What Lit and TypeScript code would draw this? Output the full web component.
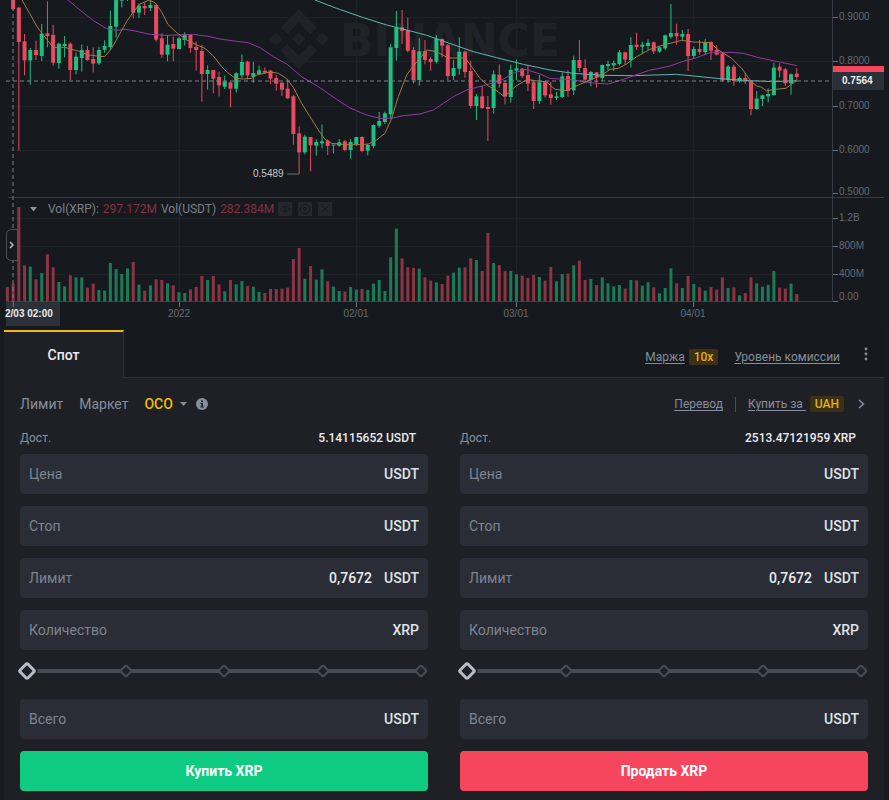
import { LitElement, html, svg, css } from "lit";
import { customElement, property } from "lit/decorators.js";
import { classMap } from "lit/directives/class-map.js";

/* One row per day: rising flag, body top, body bottom, high, low, volume top (thirds of a unit). */
const DAYS: number[][] = [
  [0, -20, -18, -20, -18, 861], [0, -10, 27, -10, 30, 850], [0, 23, 126, 20, 452, 621], [0, 124, 181, 102, 226, 796],
  [1, 150, 181, 144, 254, 800], [0, 150, 165, 122, 180, 838], [1, 101, 168, 72, 183, 819], [0, 100, 108, 4, 142, 763],
  [0, 105, 188, 75, 197, 802], [1, 131, 189, 128, 206, 846], [1, 132, 138, 108, 172, 859], [0, 131, 210, 127, 240, 826],
  [1, 170, 210, 158, 223, 832], [1, 150, 174, 133, 215, 832], [0, 150, 180, 138, 182, 863], [0, 177, 191, 142, 217, 851],
  [1, 150, 190, 140, 195, 870], [1, 138, 149, 121, 158, 872], [1, 78, 141, 32, 150, 789], [1, -10, 80, -10, 112, 807],
  [1, -10, 2, -10, 22, 822], [1, -10, -8, -10, 3, 805], [0, -10, 38, -10, 55, 786], [1, 17, 38, 10, 54, 854],
  [0, 18, 25, 8, 45, 872], [1, 15, 24, 3, 33, 856], [0, 15, 119, 14, 125, 838], [0, 115, 164, 100, 174, 840],
  [1, 134, 164, 105, 184, 850], [0, 132, 146, 110, 184, 856], [1, 115, 147, 110, 148, 877], [1, 103, 120, 97, 136, 879],
  [0, 105, 144, 104, 158, 868], [0, 141, 150, 124, 212, 861], [0, 153, 222, 135, 305, 828], [1, 210, 222, 196, 269, 840],
  [0, 210, 236, 210, 280, 828], [0, 231, 256, 215, 289, 853], [1, 244, 260, 227, 267, 874], [0, 247, 266, 245, 322, 840],
  [1, 220, 266, 217, 278, 853], [1, 186, 226, 163, 233, 843], [0, 185, 226, 182, 238, 858], [1, 219, 231, 185, 248, 860],
  [1, 211, 222, 197, 223, 876], [0, 212, 218, 202, 222, 879], [0, 212, 236, 210, 252, 867], [0, 234, 251, 225, 272, 867],
  [0, 248, 269, 247, 288, 866], [0, 266, 295, 238, 297, 863], [0, 289, 402, 284, 434, 777], [0, 400, 457, 379, 522, 744],
  [1, 410, 457, 404, 463, 836], [0, 411, 436, 411, 514, 798], [1, 426, 437, 418, 467, 839], [1, 424, 430, 373, 445, 808],
  [0, 422, 438, 418, 465, 844], [1, 434, 437, 434, 460, 860], [1, 427, 437, 417, 440, 873], [0, 424, 450, 420, 454, 875],
  [1, 426, 450, 417, 476, 861], [1, 411, 432, 411, 438, 869], [0, 411, 453, 409, 457, 867], [1, 435, 452, 432, 466, 870],
  [1, 375, 438, 373, 445, 851], [1, 363, 377, 336, 383, 840], [1, 340, 366, 335, 372, 873], [1, 142, 343, 132, 357, 772],
  [1, 83, 144, 33, 182, 686], [0, 82, 93, 30, 132, 775], [0, 90, 152, 53, 157, 802], [0, 150, 240, 142, 250, 804],
  [1, 154, 240, 115, 257, 806], [0, 153, 180, 120, 193, 832], [0, 177, 186, 170, 212, 842], [1, 116, 185, 105, 190, 847],
  [0, 117, 137, 115, 172, 852], [0, 136, 228, 132, 240, 827], [1, 204, 228, 180, 240, 818], [1, 155, 206, 112, 224, 803],
  [0, 155, 216, 152, 233, 802], [0, 213, 318, 183, 325, 775], [1, 289, 318, 282, 360, 780], [0, 289, 324, 258, 327, 813],
  [0, 321, 327, 288, 423, 699], [1, 223, 324, 211, 341, 789], [0, 224, 251, 193, 263, 795], [0, 249, 290, 240, 313, 813],
  [1, 210, 291, 194, 308, 813], [1, 205, 212, 178, 240, 823], [0, 206, 228, 204, 234, 827], [0, 225, 251, 196, 273, 834],
  [0, 247, 303, 240, 327, 825], [1, 247, 303, 225, 312, 831], [0, 245, 286, 243, 293, 842], [0, 283, 294, 246, 314, 801],
  [1, 289, 294, 276, 300, 844], [1, 229, 291, 217, 294, 822], [0, 228, 273, 210, 290, 821], [1, 180, 271, 167, 285, 796],
  [0, 180, 204, 120, 216, 782], [0, 204, 239, 178, 250, 840], [1, 216, 240, 213, 259, 837], [0, 217, 232, 217, 263, 855],
  [1, 195, 234, 193, 243, 832], [1, 192, 198, 182, 210, 850], [1, 189, 196, 182, 213, 859], [1, 157, 192, 150, 196, 855],
  [0, 157, 179, 155, 195, 866], [1, 135, 180, 112, 202, 840], [0, 134, 141, 98, 150, 841], [1, 134, 140, 125, 160, 857],
  [1, 128, 138, 118, 150, 847], [0, 127, 154, 124, 162, 862], [1, 142, 155, 140, 158, 880], [1, 106, 145, 104, 150, 864],
  [1, 99, 110, 12, 116, 805], [0, 99, 109, 71, 134, 850], [1, 102, 110, 90, 122, 864], [0, 102, 168, 87, 213, 828],
  [1, 147, 168, 139, 174, 852], [0, 147, 156, 120, 164, 862], [1, 126, 156, 117, 165, 872], [0, 126, 152, 124, 180, 861],
  [0, 150, 164, 135, 166, 869], [0, 161, 241, 158, 245, 832], [1, 200, 240, 195, 248, 864], [0, 200, 243, 194, 257, 862],
  [1, 234, 244, 230, 248, 886], [0, 234, 245, 219, 252, 879], [0, 242, 327, 240, 345, 832], [1, 296, 327, 273, 329, 850],
  [1, 286, 297, 284, 318, 860], [1, 282, 289, 265, 307, 855], [1, 203, 285, 188, 287, 813], [0, 200, 212, 190, 232, 863],
  [0, 208, 250, 204, 258, 866], [1, 223, 250, 220, 284, 851], [0, 221, 231, 204, 240, 882],
];

/* Moving averages, in the same thirds of a unit. */
const MA_FAST = "66,0 90,42 110,78 122,95 140,118 160,143 175,142 195,142 215,148 235,153 262,164 290,168 314,170 335,145 360,100 380,65 400,35 420,12 448,0 465,8 485,36 503,72 530,98 560,120 588,134 615,145 640,168 665,200 680,215 705,235 730,237 755,235 770,225 810,216 835,220 860,236 880,262 905,310 930,350 955,390 975,418 995,430 1040,434 1080,434 1105,432 1130,420 1155,400 1175,355 1195,290 1220,225 1240,198 1260,175 1280,150 1310,155 1345,174 1395,174 1415,200 1440,235 1465,258 1485,268 1510,288 1525,280 1545,260 1582,238 1605,242 1640,246 1665,268 1700,272 1735,255 1770,240 1805,226 1830,208 1855,205 1880,192 1910,170 1950,148 1980,138 2010,130 2045,121 2080,126 2130,128 2155,150 2195,175 2225,205 2250,240 2270,258 2285,262 2300,273 2325,268 2358,265 2375,252 2391,242";
const MA_MID = "204,0 240,30 280,62 320,86 350,91 375,88 400,92 450,103 500,106 580,103 630,110 660,117 710,124 745,128 780,143 820,170 860,192 905,230 955,260 1010,298 1050,324 1100,345 1140,355 1175,355 1210,347 1260,342 1300,330 1330,310 1360,290 1400,270 1450,257 1500,243 1540,220 1575,208 1620,222 1650,235 1680,237 1720,240 1780,249 1825,252 1870,238 1945,212 2010,198 2050,184 2090,173 2130,158 2190,157 2230,160 2280,174 2330,184 2391,197";
const MA_SLOW = "945,0 1010,25 1090,53 1160,75 1220,90 1280,106 1320,120 1420,155 1490,173 1570,193 1650,210 1720,220 1810,226 1900,227 2030,223 2080,228 2160,236 2250,242 2320,245 2391,242";

const PRICES: [number, string][] = [[17, "0.9000"], [61, "0.8000"], [106, "0.7000"], [150, "0.6000"], [193, "0.5000"]];
const VOLUMES: [number, string][] = [[218, "1.2B"], [246, "800M"], [274, "400M"], [301, "0.00"]];
const DATES: [number, string][] = [[179, "2022"], [356, "02/01"], [516, "03/01"], [693, "04/01"]];

@customElement("price-chart")
export class PriceChart extends LitElement {
  static styles = css`
    :host { display: block; position: relative; background: #161a1e; font-family: Roboto, sans-serif; }
    .plot { display: block; width: 100%; height: auto; }
    .label { font: 10px "Liberation Sans", sans-serif; fill: #646b76; }
    .low { fill: #c3c8cf; }
    .tag { font-weight: 700; fill: #eaecef; }
    .mid { text-anchor: middle; }
    .mark { font: 700 44px "DejaVu Sans", sans-serif; fill: #1f2328; }
    .logo { fill: #1f2328; }
    .grid { stroke: #1e2227; }
    .axis { stroke: #363b44; }
    .tick { stroke: #6a707a; }
    .up { fill: #1fbf81; }
    .down { fill: #ea4a60; }
    .vol-up { fill: #1d7a56; }
    .vol-down { fill: #8b3444; }
    .ma { fill: none; stroke-width: 3; }
    .fast { stroke: #a47a45; }
    .mid-line { stroke: #94399f; }
    .slow { stroke: #5fb5b0; }
    .cross { stroke: #7b8088; stroke-dasharray: 4 3; }
    .plate { fill: #2b3139; }
    .last { fill: #f6465d; }
    .legend { position: absolute; top: 202px; left: 29px; display: flex; align-items: center; gap: 4px; font-size: 12px; line-height: 14px; color: #7a808a; }
    .caret { width: 9px; height: 5px; margin-right: 6px; }
    .value { color: #86303e; }
    .tool { width: 14px; height: 14px; padding: 0; border: 0; background: #24282d; }
    .tool + .tool { margin-left: 2px; }
    .tool svg { display: block; width: 14px; height: 14px; fill: none; stroke: #171b20; }
    .handle { position: absolute; top: 229px; left: 6px; width: 12px; height: 32px; padding: 0; border: 1px solid #4a4f58; border-radius: 5px 0 0 5px; background: #161a1e; }
    .handle svg { display: block; width: 10px; height: 10px; fill: none; stroke: #b7bdc6; stroke-width: 1.5; }
  `;

  private candle(d: number[], i: number) {
    const x = 7.4 + i * 5.72;
    const tone = d[0] ? "up" : "down";
    return svg`
      <rect class=${tone} x=${x - 0.5} y=${d[3] / 3} width="1" height=${(d[4] - d[3]) / 3}></rect>
      <rect class=${tone} x=${x - 2} y=${d[1] / 3} width="4" height=${(d[2] - d[1]) / 3}></rect>
      <rect class="vol-${tone}" x=${x - 1.5} y=${d[5] / 3} width="3" height=${301.5 - d[5] / 3}></rect>`;
  }

  render() {
    return html`
      <svg class="plot" viewBox="0 0 889 330" role="img" aria-label="XRP/USDT">
        ${PRICES.slice(0, 4).concat(VOLUMES.slice(0, 3)).map(([y]) => svg`<path class="grid" d="M8 ${y + 0.5}H832"></path>`)}
        ${DATES.map(([x]) => svg`<path class="grid" d="M${x + 0.5} 0V301"></path>`)}
        <g class="logo" transform="translate(269 9) scale(.474)">
          <path d="M38.2 53.2 62.8 28.6 87.4 53.2 101.7 38.9 62.8 0 23.9 38.9zM0 63.3 14.3 49 28.6 63.3 14.3 77.6zM38.2 73.4 62.8 98 87.4 73.4 101.7 87.7 62.8 126.6 23.9 87.7zM98 63.3 112.3 49 126.6 63.3 112.3 77.6zM77.3 63.3 62.8 48.8 48.3 63.3 62.8 77.8z"></path>
        </g>
        <text class="mark" x="340" y="56">BINANCE</text>
        <path class="axis" d="M8 197.5H884M8 301.5H832M832.5 0V302"></path>
        ${DAYS.map((d, i) => this.candle(d, i))}
        <g transform="scale(.33333)">
          <polyline class="ma slow" points=${MA_SLOW}></polyline>
          <polyline class="ma mid-line" points=${MA_MID}></polyline>
          <polyline class="ma fast" points=${MA_FAST}></polyline>
        </g>
        ${PRICES.map(([y, t]) => svg`<path class="tick" d="M833 ${y + 0.5}h5"></path><text class="label" x="839" y=${y === 193 ? 195 : y + 3}>${t}</text>`)}
        ${VOLUMES.map(([y, t]) => svg`<path class="tick" d="M833 ${y + 0.5}h5"></path><text class="label" x="839" y=${y === 301 ? 300 : y + 3}>${t}</text>`)}
        ${DATES.map(([x, t]) => svg`<path class="tick" d="M${x + 0.5} 302v5"></path><text class="label mid" x=${x} y="317">${t}</text>`)}
        <path class="tick" d="M287 174h12"></path>
        <text class="label low" x="253" y="177">0.5489</text>
        <path class="cross" d="M6 81H832M13 0V302"></path>
        <rect class="last" x="833" y="66" width="51" height="6"></rect>
        <rect class="plate" x="833" y="72" width="51" height="18"></rect>
        <text class="label tag" x="842" y="84">0.7564</text>
        <rect class="plate" x="6" y="302" width="54" height="24"></rect>
        <path class="tick" d="M13.5 302v5"></path>
        <text class="label tag" x="5" y="317">2/03 02:00</text>
      </svg>
      <div class="legend">
        <svg class="caret" viewBox="0 0 9 5"><path fill="#8d939d" d="M1 0h7L4.500 4.500z"></path></svg>
        <span>Vol(XRP):</span><span class="value">297.172M</span>
        <span>Vol(USDT)</span><span class="value">282.384M</span>
        <button class="tool" aria-label="Показать"><svg viewBox="0 0 14 14"><path d="M2 7q5-6 10 0q-5 6-10 0z"></path><circle cx="7" cy="7" r="1.500"></circle></svg></button>
        <button class="tool" aria-label="Настройки"><svg viewBox="0 0 14 14"><circle cx="7" cy="7" r="4.500"></circle><circle cx="7" cy="7" r="1.500"></circle></svg></button>
        <button class="tool" aria-label="Закрыть"><svg viewBox="0 0 14 14"><path d="M3 3l8 8M11 3l-8 8"></path></svg></button>
      </div>
      <button class="handle" aria-label="Развернуть"><svg viewBox="0 0 10 10"><path d="M3 2l3 3-3 3"></path></svg></button>
    `;
  }
}

@customElement("order-form")
export class OrderForm extends LitElement {
  @property() side = "buy";
  @property() balance = "";
  @property() action = "";

  static styles = css`
    :host { display: block; min-width: 0; }
    .avail { display: flex; justify-content: space-between; padding-right: 12px; margin-bottom: 8px; font-size: 12px; line-height: 16px; color: #848e9c; }
    .amount { font-weight: 500; color: #eaecef; }
    .field { display: flex; align-items: center; gap: 12px; height: 40px; margin-bottom: 12px; padding: 0 9px; border-radius: 4px; background: #2b2d36; font-size: 14px; }
    .name { flex: none; color: #7d8490; }
    .input { flex: 1; min-width: 0; padding: 0; border: 0; outline: 0; background: none; text-align: right; font: 500 14px Roboto, sans-serif; color: #eaecef; }
    .unit { font-weight: 500; color: #dfe2e7; }
    .slider { display: grid; align-items: center; height: 14px; margin: 14px 0 21px; }
    .slider::before { content: ""; height: 4px; margin: 0 7px; background: #474d57; grid-area: 1 / 1; }
    .ticks { grid-area: 1 / 1; display: flex; justify-content: space-between; padding: 0 2px; }
    .dot { box-sizing: border-box; width: 10px; height: 10px; border: 2px solid #474d57; border-radius: 2px; background: #1f2026; transform: rotate(45deg); }
    .range { grid-area: 1 / 1; z-index: 1; appearance: none; width: 100%; height: 14px; margin: 0; background: none; }
    .range::-webkit-slider-thumb { appearance: none; box-sizing: border-box; width: 14px; height: 14px; border: 3px solid #b7bdc6; border-radius: 3px; background: #1f2026; box-shadow: 0 0 0 2px #1f2026; transform: rotate(45deg); }
    .submit { display: block; width: 100%; height: 40px; padding: 0; border: 0; border-radius: 4px; font: 700 14px Roboto, sans-serif; color: #fff; background: #0ecb81; }
    .sell { background: #f6465d; }
  `;

  private field(name: string, unit: string, value = "") {
    return html`<label class="field"><span class="name">${name}</span><input class="input" type="text" .value=${value}><span class="unit">${unit}</span></label>`;
  }

  render() {
    return html`
      <div class="avail"><span>Дост.</span><span class="amount">${this.balance}</span></div>
      ${this.field("Цена", "USDT")}
      ${this.field("Стоп", "USDT")}
      ${this.field("Лимит", "USDT", "0,7672")}
      ${this.field("Количество", "XRP")}
      <div class="slider">
        <div class="ticks">${[0, 25, 50, 75, 100].map(() => html`<i class="dot"></i>`)}</div>
        <input class="range" type="range" min="0" max="100" .value=${"0"} aria-label="Количество, %">
      </div>
      ${this.field("Всего", "USDT")}
      <button class=${classMap({ submit: true, sell: this.side === "sell" })}>${this.action}</button>
    `;
  }
}

@customElement("app-root")
export class AppRoot extends LitElement {
  static styles = css`
    :host { display: block; min-height: 100vh; background: #181a1f; font-family: Roboto, sans-serif; color: #848e9c; }
    .panel { margin: 0 5px 0 4px; padding-bottom: 9px; background: #1f2026; }
    .tabs { display: flex; height: 48px; background: #161a1e; }
    .tab { box-sizing: border-box; width: 120px; padding: 0; border: 0; border-top: 2px solid #f0b90b; border-right: 1px solid #2b2f36; background: #1f2026; font: 500 14px Roboto, sans-serif; color: #eaecef; }
    .tools { flex: 1; display: flex; align-items: center; justify-content: flex-end; padding: 6px 16px 0 0; border-bottom: 1px solid #2b2f36; font-size: 12px; }
    .link { color: #848e9c; text-underline-offset: 2px; }
    .badge { margin-left: 4px; padding: 0 5px; border-radius: 2px; background: #3c3016; color: #e4b10e; font-weight: 500; line-height: 16px; }
    .fee { margin-left: 16px; }
    .icon { display: block; padding: 0; border: 0; background: none; }
    .more { margin: 0 0 6px 24px; }
    .types { display: flex; align-items: center; justify-content: space-between; height: 20px; padding: 16px; }
    .group { display: flex; align-items: center; font-size: 12px; }
    .type { padding: 0; margin-right: 16px; border: 0; background: none; font: 14px Roboto, sans-serif; color: #848e9c; }
    .active { margin-right: 7px; font-weight: 500; color: #f0b90b; }
    .info { margin-left: 9px; }
    .rule { width: 1px; height: 15px; margin: 0 12px; background: #474d57; }
    .next { margin: 0 3px 0 14px; }
    .forms { display: grid; grid-template-columns: 1fr 1fr; gap: 32px; padding: 0 16px; }
  `;

  render() {
    return html`
      <price-chart></price-chart>
      <main class="panel">
        <div class="tabs">
          <button class="tab">Спот</button>
          <div class="tools">
            <a class="link" href="#margin">Маржа</a><span class="badge">10x</span>
            <a class="link fee" href="#fee">Уровень комиссии</a>
            <button class="icon more" aria-label="Ещё"><svg class="icon" width="4" height="16" viewBox="0 0 4 16" fill="#848e9c"><circle cx="2" cy="3" r="1.400"></circle><circle cx="2" cy="8" r="1.400"></circle><circle cx="2" cy="13" r="1.400"></circle></svg></button>
          </div>
        </div>
        <div class="types">
          <div class="group">
            <button class="type">Лимит</button>
            <button class="type">Маркет</button>
            <button class="type active">OCO</button>
            <svg width="7" height="4" viewBox="0 0 7 4"><path fill="#848e9c" d="M0 0h7L3.500 4z"></path></svg>
            <svg class="info" width="12" height="12" viewBox="0 0 12 12"><circle cx="6" cy="6" r="6" fill="#848e9c"></circle><path fill="#1f2026" d="M5 2.500h2v1.500H5zM4.500 5H7v3.500h.8V9.500H4.300V8.500H5.200V6H4.500z"></path></svg>
          </div>
          <div class="group">
            <a class="link" href="#transfer">Перевод</a><span class="rule"></span>
            <a class="link" href="#buy">Купить за&nbsp;</a><span class="badge">UAH</span>
            <button class="icon next" aria-label="Далее"><svg class="icon" width="7" height="12" viewBox="0 0 7 12" fill="none" stroke="#848e9c" stroke-width="1.500"><path d="M1 2l4.500 4L1 10"></path></svg></button>
          </div>
        </div>
        <div class="forms">
          <order-form side="buy" balance="5.14115652 USDT" action="Купить XRP"></order-form>
          <order-form side="sell" balance="2513.47121959 XRP" action="Продать XRP"></order-form>
        </div>
      </main>
    `;
  }
}
